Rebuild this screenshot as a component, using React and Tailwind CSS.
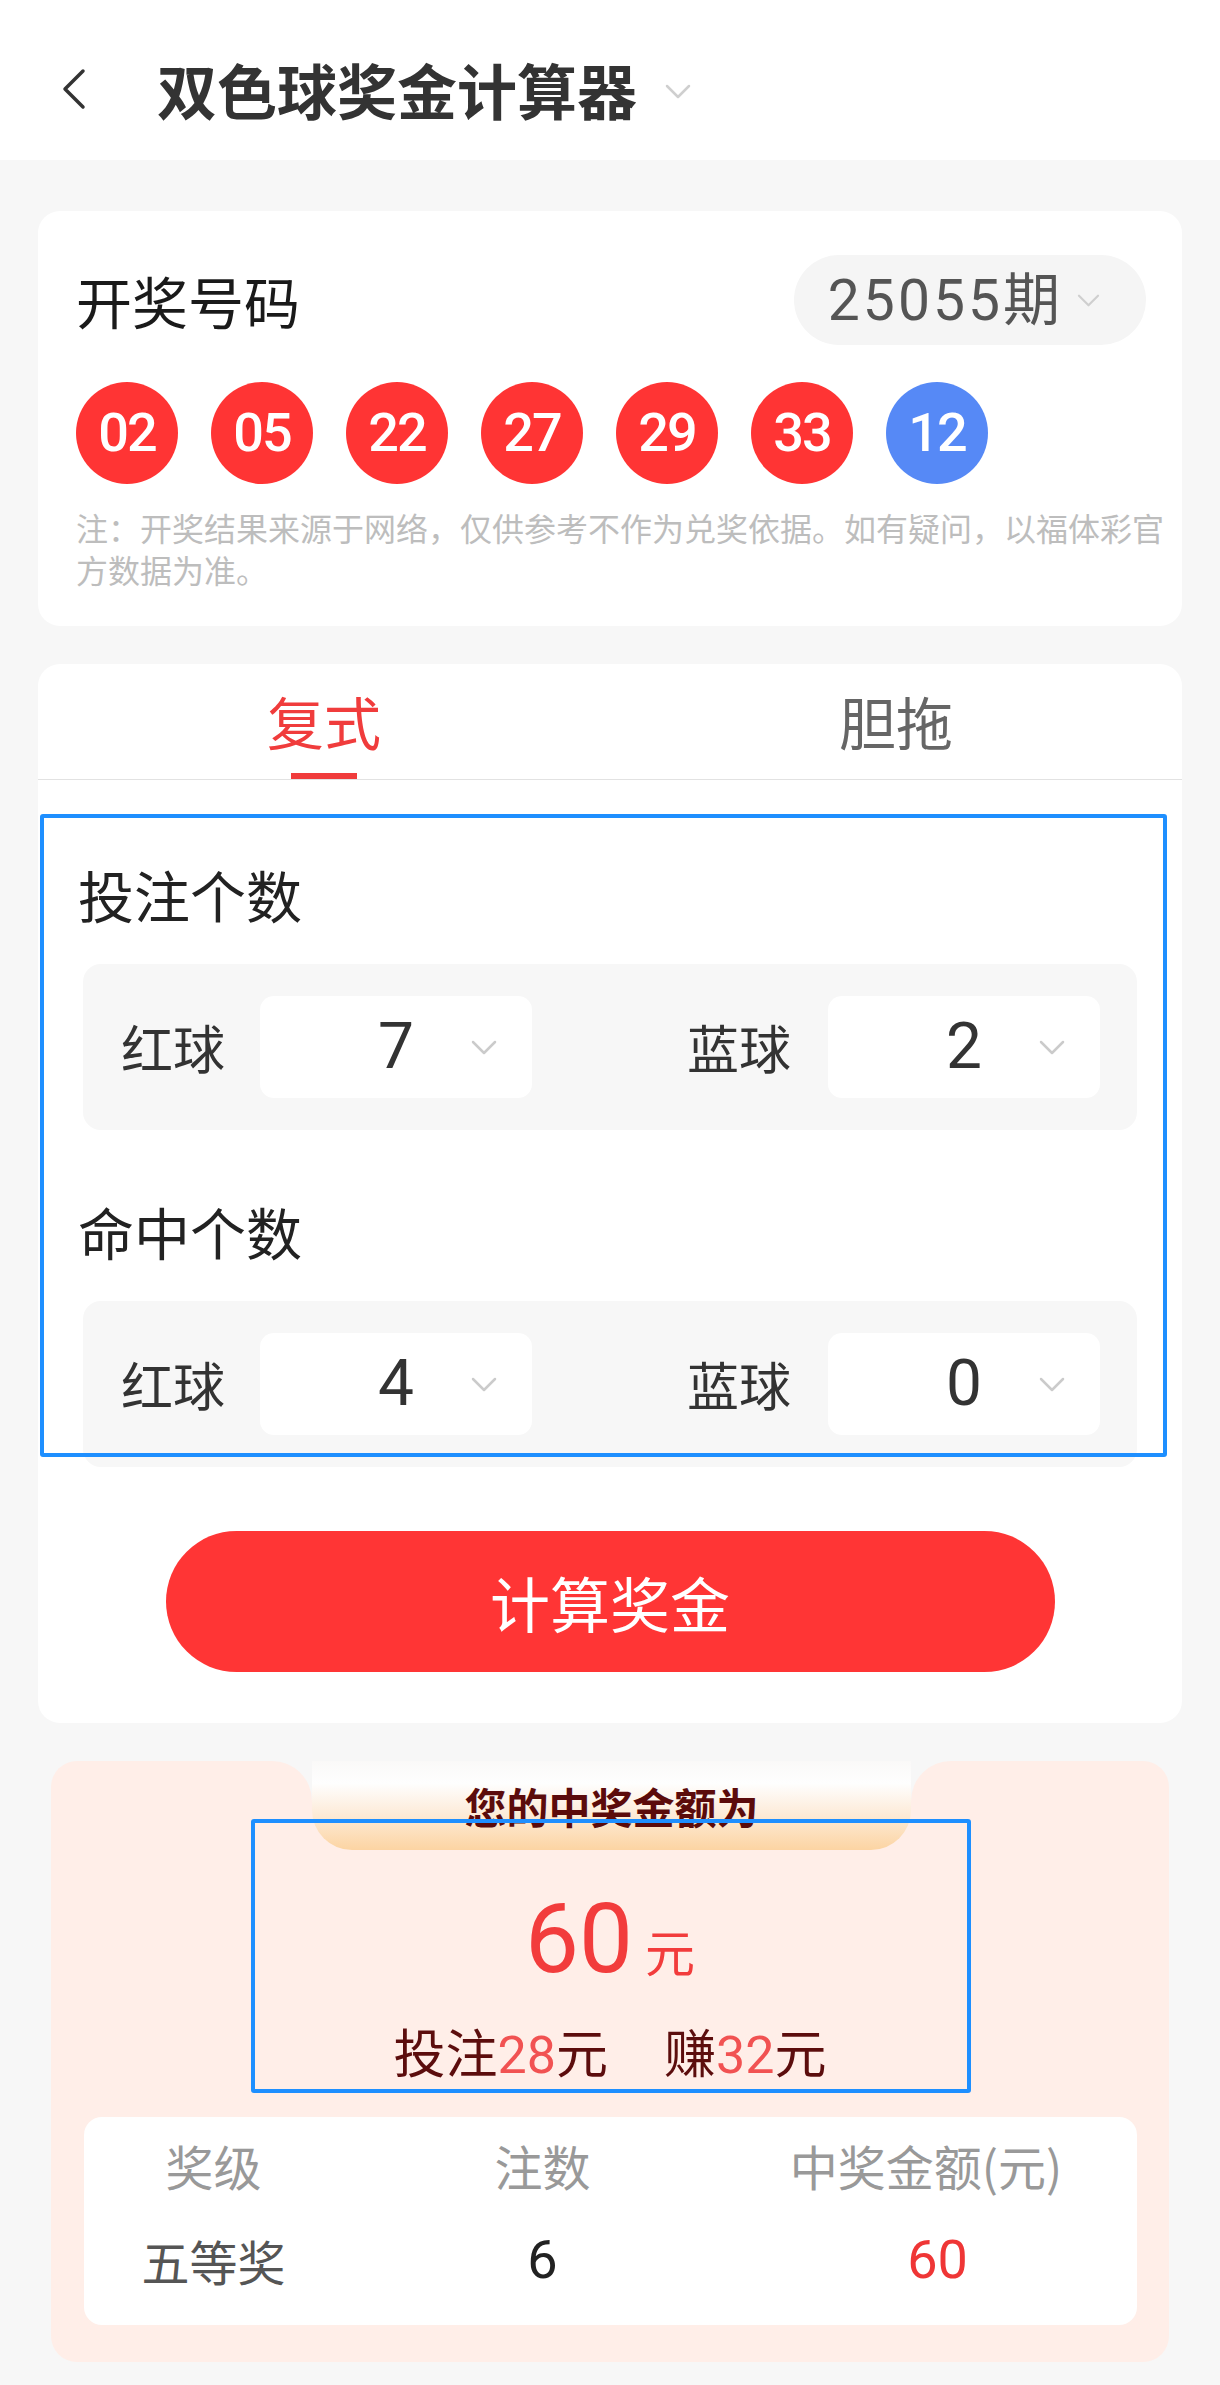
import React from 'react';

const Chevron = ({ className }) => (
  <svg viewBox="0 0 26 15" className={className} fill="none" stroke="currentColor" strokeWidth="2.5" strokeLinecap="round" strokeLinejoin="round">
    <polyline points="2,2 13,13 24,2" />
  </svg>
);

const BackIcon = () => (
  <svg viewBox="0 0 24 42" className="w-[24px] h-[42px] text-[#333]" fill="none" stroke="currentColor" strokeWidth="3.5" strokeLinecap="round" strokeLinejoin="round">
    <polyline points="21,3 3,21 21,39" />
  </svg>
);

const balls = [
  { n: '02', blue: false },
  { n: '05', blue: false },
  { n: '22', blue: false },
  { n: '27', blue: false },
  { n: '29', blue: false },
  { n: '33', blue: false },
  { n: '12', blue: true },
];

const Select = ({ value }) => (
  <div className="w-[272px] h-[102px] bg-white rounded-[14px] grid grid-cols-[1fr_auto_1fr] items-center">
    <span />
    <span className="text-[64px] leading-none text-[#333] font-[family-name:Roboto,sans-serif]">{value}</span>
    <Chevron className="ml-[57px] w-[26px] h-[15px] text-[#cbcbcb]" />
  </div>
);

const CountRow = ({ red, blue }) => (
  <div className="mx-[45px] h-[166px] bg-[#f7f7f7] rounded-[18px] flex items-center text-[52px] leading-none text-[#333]">
    <span className="ml-[38px]">红球</span>
    <div className="ml-[35px]">
      <Select value={red} />
    </div>
    <span className="ml-[155px]">蓝球</span>
    <div className="ml-[37px]">
      <Select value={blue} />
    </div>
  </div>
);

export default function App() {
  return (
    <div className="w-full min-h-screen bg-[#f7f7f7] pb-[27px] font-[family-name:'Noto_Sans_CJK_SC',sans-serif]">
      {/* Header */}
      <div className="h-[160px] bg-white flex items-center pt-[18px]">
        <div className="ml-[62px]">
          <BackIcon />
        </div>
        <h1 className="ml-[71px] text-[60px] leading-none font-bold text-[#333]">双色球奖金计算器</h1>
        <Chevron className="ml-[28px] mt-[4px] w-[26px] h-[15px] text-[#cfcfcf]" />
      </div>

      <div className="px-[38px] pt-[51px]">
        {/* Draw numbers card */}
        <div className="bg-white rounded-[22px] px-[38px] pt-[44px] pb-[36px]">
          <div className="flex items-center justify-between">
            <span className="text-[56px] leading-none text-[#1a1a1a]">开奖号码</span>
            <div className="h-[90px] rounded-full bg-[#f5f5f5] flex items-center pl-[34px] pr-[45px] -mr-[2px]">
              <span className="text-[57px] leading-none text-[#555] font-[family-name:Roboto,'Noto_Sans_CJK_SC',sans-serif] tracking-[3px]">25055期</span>
              <Chevron className="ml-[13px] w-[25px] h-[13px] text-[#cfcfcf]" />
            </div>
          </div>
          <div className="mt-[37px] flex gap-[33px]">
            {balls.map((b) => (
              <div
                key={b.n}
                className={`w-[102px] h-[102px] rounded-full flex items-center justify-center text-white text-[54px] leading-none font-medium tracking-[-2px] font-[family-name:Roboto,sans-serif] ${b.blue ? 'bg-[#5689f6]' : 'bg-[#ff3434]'}`}
              >
                {b.n}
              </div>
            ))}
          </div>
          <p className="mt-[22px] w-[1092px] text-[32px] leading-[42px] text-[#bdbdbd]">
            注：开奖结果来源于网络，仅供参考不作为兑奖依据。如有疑问，以福体彩官方数据为准。
          </p>
        </div>

        {/* Calculator card */}
        <div className="relative mt-[38px] bg-white rounded-[22px] pb-[51px]">
          <div className="flex border-b border-[#e2e2e2]">
            <div className="flex-1 h-[115px] flex flex-col items-center justify-end">
              <span className="text-[57px] leading-none text-[#f03c3c]">复式</span>
              <div className="mt-[24px] w-[66px] h-[6px] bg-[#f03c3c]" />
            </div>
            <div className="flex-1 h-[115px] flex flex-col items-center justify-end">
              <span className="text-[57px] leading-none text-[#666]">胆拖</span>
              <div className="mt-[24px] w-[66px] h-[6px]" />
            </div>
          </div>

          <div className="pl-[40px] mt-[86px] text-[56px] leading-none text-[#222]">投注个数</div>
          <div className="mt-[42px]">
            <CountRow red="7" blue="2" />
          </div>

          <div className="pl-[40px] mt-[73px] text-[56px] leading-none text-[#222]">命中个数</div>
          <div className="mt-[42px]">
            <CountRow red="4" blue="0" />
          </div>

          <div className="mt-[64px] flex justify-center">
            <button className="w-[889px] h-[141px] rounded-full bg-[#ff3535] text-white text-[60px] leading-none">
              计算奖金
            </button>
          </div>

          <div className="pointer-events-none absolute left-[2px] top-[150px] w-[1127px] h-[643px] border-[4px] border-[#1e8fff] rounded-[3px]" />
        </div>

        {/* Result card */}
        <div className="relative mt-[38px] mx-[13px]">
          <div className="flex h-[89px] bg-[linear-gradient(to_bottom,transparent_50%,#ffeee8_50%)]">
            <div className="w-[261px] bg-[#ffeee8] rounded-tl-[26px] rounded-tr-[40px]" />
            <div className="flex-1 rounded-b-[40px] bg-[linear-gradient(to_bottom,#faf9f8_0%,#fefefe_25%,#fdebd8_60%,#fcd4a2_100%)] flex items-center justify-center">
              <span className="text-[42px] leading-none font-bold text-[#5b0b0b]">您的中奖金额为</span>
            </div>
            <div className="w-[258px] bg-[#ffeee8] rounded-tl-[40px] rounded-tr-[26px]" />
          </div>
          <div className="bg-[#ffeee8] rounded-b-[26px] flex flex-col items-center pb-[37px]">
            <div className="mt-[41px] flex items-baseline text-[#f23c3c]">
              <span className="text-[96px] leading-none font-[family-name:Roboto,sans-serif]">60</span>
              <span className="ml-[12px] text-[50px] leading-none">元</span>
            </div>
            <div className="mt-[38px] flex items-baseline text-[52px] leading-none text-[#5c0d0d]">
              <span>投注</span>
              <span className="text-[#f15252] font-[family-name:Roboto,sans-serif]">28</span>
              <span>元</span>
              <span className="ml-[56px]">赚</span>
              <span className="text-[#f15252] font-[family-name:Roboto,sans-serif]">32</span>
              <span>元</span>
            </div>
            <div className="mt-[35px] w-[1053px] bg-white rounded-[18px] pb-[18px]">
              <div className="grid grid-cols-[260px_392px_1fr] h-[96px] items-center text-center text-[48px] leading-none text-[#999]">
                <span>奖级</span>
                <span className="pl-[6px]">注数</span>
                <span className="pr-[20px]">中奖金额(元)</span>
              </div>
              <div className="grid grid-cols-[260px_392px_1fr] h-[94px] items-center text-center text-[48px] leading-none">
                <span className="text-[#555]">五等奖</span>
                <span className="pl-[6px] text-[54px] text-[#222] font-[family-name:Roboto,sans-serif]">6</span>
                <span className="pl-[3px] text-[54px] text-[#ef3636] font-[family-name:Roboto,sans-serif]">60</span>
              </div>
            </div>
          </div>

          <div className="pointer-events-none absolute left-[200px] top-[58px] w-[720px] h-[274px] border-[4px] border-[#1e8fff] rounded-[3px]" />
        </div>
      </div>
    </div>
  );
}
